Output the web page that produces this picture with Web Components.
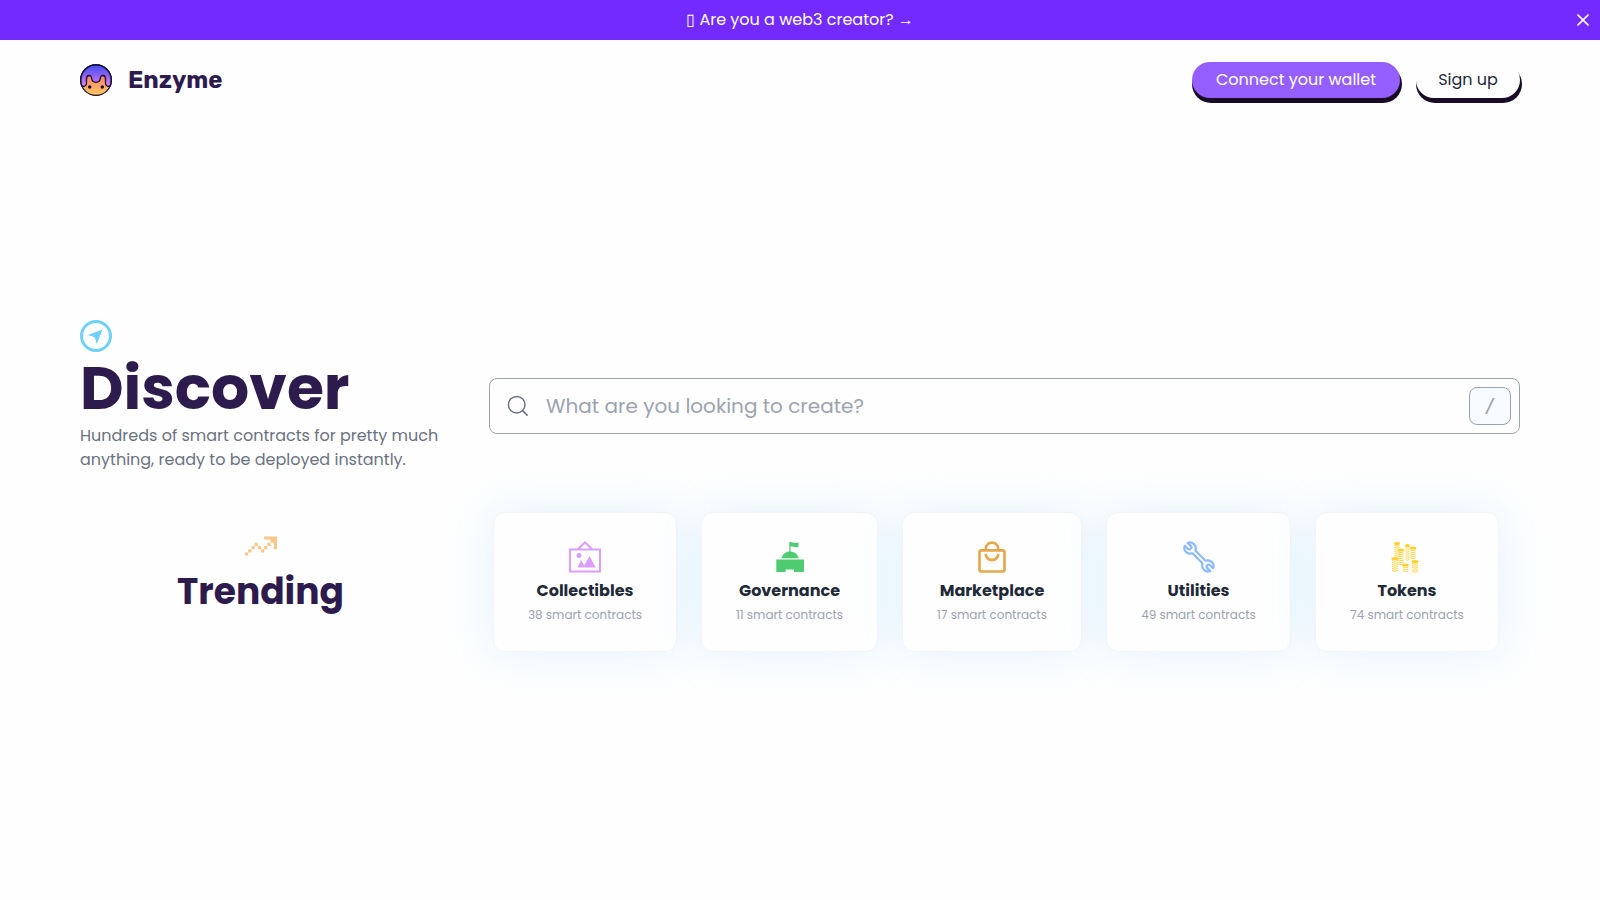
<!DOCTYPE html>
<html lang="en">
<head>
<meta charset="utf-8">
<meta name="viewport" content="width=device-width, initial-scale=1">
<title>Enzyme</title>
<style>
  body { margin: 0; background: #fefefe; color: #1f2937; font: 16px/24px Poppins, sans-serif; text-rendering: optimizeSpeed; }
</style>
</head>
<body>
<enzyme-app></enzyme-app>
<script>
const define = (name, html, setup) => customElements.define(name, class extends HTMLElement {
  connectedCallback() {
    if (this.shadowRoot) return;
    const t = document.createElement('template');
    t.innerHTML = html;
    this.attachShadow({ mode: 'open' }).append(t.content.cloneNode(true));
    if (setup) setup(this, this.shadowRoot);
  }
});

const coin = (x, y, n, w = 6) => {
  let s = `<ellipse cx="${x}" cy="${y}" rx="${w / 2 + .6}" ry="1.5" fill="#ffd02e"/>`;
  for (let i = 1; i <= n; i++) s += `<path d="M${x - w / 2} ${y + i * 2}q${w / 2} 1.3 ${w} 0" fill="none" stroke="#ffd64a" stroke-width="1"/>`;
  return s;
};

const icons = {
  collectibles: `<g fill="none" stroke="#db9dff" stroke-width="2"><path d="M1 8.500h30v22H1zM9 8l7-6.600L23 8"/></g><circle cx="10" cy="14.500" r="2.500" fill="#db9dff"/><path d="M8.500 26.500l3.500-7.500 3.200 5.500L20.500 15l6.200 11.500z" fill="#db9dff"/>`,
  governance: `<path d="M15.300 1c3-.6 5 2 9.200.6V6c-4 1.200-5.500-1-8-.2v4.700c4.500.4 7.300 3 8.200 6.700H7.500c.8-3.500 3.700-6.200 7.800-6.700zM2.300 18.500H30V31H20v-2.600h-8.300V31H2.300z" fill="#4fcb71"/>`,
  marketplace: `<g fill="none" stroke="#e6a84c" stroke-width="2.700"><rect x="3.500" y="9.300" width="25" height="21.200" rx="2"/><path d="M9.700 9V8a6.300 6.300 0 0 1 12.600 0v1M9.700 12.800a6.300 6.300 0 0 0 12.600 0"/></g>`,
  utilities: `<g fill="none" stroke="#8cb9ff" stroke-width="2.200" stroke-linejoin="round"><path d="M4.700 1.900l3.600 3.500c.6 1.700-1.200 3.500-2.900 2.900L1.900 4.700C-.3 9.300 4.500 14 9.500 12.300l10 10C17.800 27.500 22.700 32 27.300 30.100l-3.600-3.500c-.6-1.700 1.200-3.500 2.900-2.900l3.500 3.600c2.200-4.600-2.600-9.300-7.600-7.600l-10-10C14.200 4.500 9.300 0 4.700 1.900z"/></g>`,
  tokens: coin(10, 9, 7, 5.500) + coin(6, 2.500, 6, 5) + coin(16.500, 4.500, 7, 4) + coin(22, 7, 5, 5.500) + coin(4, 17.500, 6) + coin(24, 20.500, 5) + coin(14.500, 24, 3, 5.500)
};

define('top-banner', `
<style>
  :host { display: flex; align-items: center; min-height: 40px; background: #732aff; color: #fff; }
  p { flex: 1; margin: 0; padding-left: 34px; text-align: center; }
  a { color: inherit; text-decoration: none; }
  button { display: grid; place-items: center; width: 34px; height: 34px; padding: 0; border: 0; background: none; color: inherit; cursor: pointer; }
</style>
<p><a href="#creator"><slot></slot></a></p>
<button type="button" aria-label="Close"><svg width="12" height="12" viewBox="0 0 12 12" fill="none" stroke="currentColor" stroke-width="1.600"><path d="M.5.500l11 11M11.500.500l-11 11"/></svg></button>`);

define('brand-mark', `
<style>
  :host { display: block; }
  a { display: flex; align-items: center; gap: 16px; color: #2d1b4e; text-decoration: none; font-family: Rubik, Inter, sans-serif; font-weight: 700; font-size: 24px; line-height: 32px; }
</style>
<a href="#home"><svg width="32" height="32" viewBox="0 0 32 32" aria-hidden="true">
<defs><linearGradient id="drip" x2="0" y2="1"><stop stop-color="#3f4df0"/><stop offset=".5" stop-color="#8d61f4"/><stop offset="1" stop-color="#e983ee"/></linearGradient>
<linearGradient id="face" x2="0" y2="1"><stop offset=".3" stop-color="#ff7a70"/><stop offset="1" stop-color="#ffc85c"/></linearGradient></defs>
<circle cx="16" cy="16" r="15.400" fill="url(#face)"/>
<path d="M.8 16a15.200 15.200 0 0 1 30.400 0l-.4 4.500c-.6 2.800-5 2.400-5.300-1V15c0-4.600-5-4.600-5.200-.5-.3 5-8.300 5-8.600 0-.2-4.100-5.200-4.100-5.200.5v4.500c-.3 3.400-4.700 3.800-5.300 1z" fill="url(#drip)" stroke="#151033" stroke-width="1.300"/>
<circle cx="16" cy="16" r="15.400" fill="none" stroke="#151033" stroke-width="1.200"/>
<circle cx="9.700" cy="23" r="1.800" fill="#24122c"/><circle cx="22.300" cy="23" r="1.800" fill="#24122c"/></svg><slot></slot></a>`);

define('pill-button', `
<style>
  :host { display: block; }
  button { width: var(--pill-width, 104px); height: 36px; padding: 0; border: 0; border-radius: 18px; background: #fefefe; color: #1f2937; font: inherit; text-rendering: inherit; box-shadow: 1px 4px 0 1px #180c26; cursor: pointer; white-space: nowrap; }
  :host([primary]) button { background: #955fff; color: #fff; }
</style>
<button type="button"><slot></slot></button>`);

define('site-header', `
<style>
  :host { display: flex; justify-content: space-between; align-items: center; min-height: 80px; padding: 0 80px; }
  nav { display: flex; gap: 16px; }
  .wide { --pill-width: 208px; }
</style>
<brand-mark>Enzyme</brand-mark>
<nav><pill-button primary class="wide">Connect your wallet</pill-button><pill-button>Sign up</pill-button></nav>`);

define('discover-intro', `
<style>
  :host { display: block; }
  svg { display: block; }
  h1 { margin: 6px 0; color: #2d1b4e; font-size: 60px; line-height: 60px; font-weight: 700; }
  p { margin: 0; color: #6b7280; }
</style>
<svg width="32" height="32" viewBox="0 0 32 32" aria-hidden="true"><circle cx="16" cy="16" r="14.500" fill="none" stroke="#6dd0ff" stroke-width="3"/><path d="M22.500 9.500L8 15l6.700 2.200L16.800 24z" fill="#6dd0ff"/></svg>
<h1>Discover</h1>
<p><slot></slot></p>`);

define('search-box', `
<style>
  :host { display: block; }
  label { display: flex; align-items: center; height: 54px; padding: 0 8px 0 17px; border: 1px solid #9ca3af; border-radius: 8px; color: #6b7280; background: #fefefe; }
  svg { flex: none; }
  input { flex: 1; min-width: 0; margin: 0 17px; padding: 0; border: 0; outline: 0; background: none; color: #1f2937; font: inherit; text-rendering: inherit; font-size: 20px; line-height: 28px; }
  input::placeholder { color: #9ca3af; opacity: 1; }
  kbd { box-sizing: border-box; width: 42px; height: 38px; border: 1px solid #9ca3af; border-radius: 8px; background: #f7fbff; color: #9ca3af; font: 20px/34px "DejaVu Sans Mono", monospace; text-align: center; }
</style>
<label><svg width="22" height="22" viewBox="0 0 22 22" fill="none" stroke="currentColor" stroke-width="1.500" aria-hidden="true"><circle cx="9.700" cy="9.700" r="8.300"/><path d="M15.600 15.600l5 5"/></svg>
<input type="search" aria-label="Search smart contracts" placeholder="What are you looking to create?"><kbd>/</kbd></label>`);

define('trending-title', `
<style>
  :host { display: flex; flex-direction: column; align-items: center; padding-bottom: 22px; }
  h2 { margin: 10px 0 0; color: #2d1b4e; font-size: 36px; line-height: 40px; font-weight: 700; }
</style>
<svg width="32" height="32" viewBox="0 -2 10 10" fill="#f7c889" aria-hidden="true"><path d="M0 5h1v1H0zM1 4h1v1H1zM2 3h1v1H2zM3 2h1v1H3zM4 3h1v1H4zM5 4h1v1H5zM6 3h1v1H6zM7 2h1v1H7zM6 0h4v4H9V2H8V1H6z"/></svg>
<h2><slot></slot></h2>`);

define('category-card', `
<style>
  :host { display: block; }
  a { display: flex; flex-direction: column; align-items: center; padding: 28px 0 24px; border: 1px solid #f3f4f6; border-radius: 12px; background: #fefefe; box-shadow: 0 0 45px rgb(110 195 255 / .2); color: #1f2937; text-decoration: none; }
  h3 { margin: 6px 0 0; font-size: 16px; line-height: 24px; font-weight: 700; }
  p { margin: 0; color: #9ca3af; font-size: 12px; line-height: 24px; }
</style>
<a href="#category"><svg width="32" height="32" viewBox="0 0 32 32" aria-hidden="true"></svg><h3></h3><p><slot></slot></p></a>`,
(host, root) => {
  const name = host.getAttribute('name');
  root.querySelector('h3').textContent = name;
  root.querySelector('a').href = '#' + name.toLowerCase();
  root.querySelector('svg').innerHTML = icons[name.toLowerCase()];
});

define('category-list', `
<style>
  :host { display: grid; grid-template-columns: 184fr 177fr 180fr 185fr 184fr; gap: 24px; padding: 0 21px 0 4px; isolation: isolate; }
</style>
<slot></slot>`);

define('enzyme-app', `
<style>
  :host { display: block; }
  main { display: grid; grid-template-columns: 361px minmax(0, 1fr); column-gap: 48px; row-gap: 40px; padding: 200px 80px 80px; align-items: center; }
  search-box { padding-top: 20px; }
</style>
<top-banner>&#x25AF; Are you a web3 creator? →</top-banner>
<site-header></site-header>
<main>
  <discover-intro>Hundreds of smart contracts for pretty much anything, ready to be deployed instantly.</discover-intro>
  <search-box></search-box>
  <trending-title>Trending</trending-title>
  <category-list>
    <category-card name="Collectibles">38 smart contracts</category-card>
    <category-card name="Governance">11 smart contracts</category-card>
    <category-card name="Marketplace">17 smart contracts</category-card>
    <category-card name="Utilities">49 smart contracts</category-card>
    <category-card name="Tokens">74 smart contracts</category-card>
  </category-list>
</main>`);
</script>
</body>
</html>
